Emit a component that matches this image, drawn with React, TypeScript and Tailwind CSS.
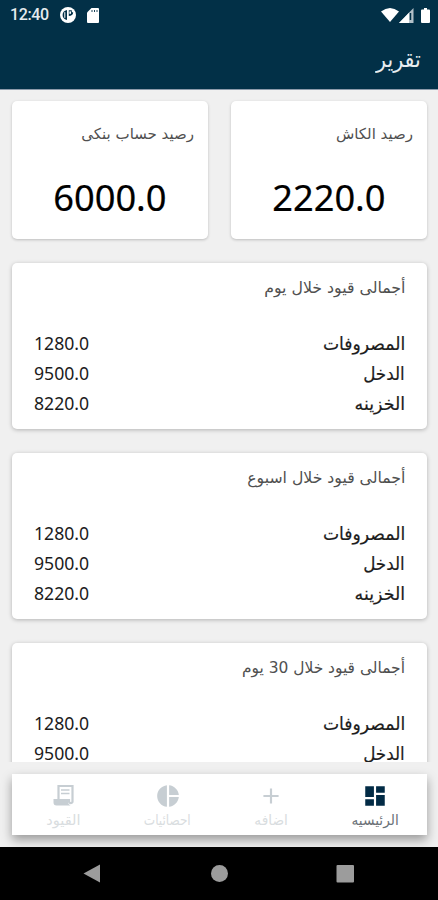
import React from "react";
import { MdAdd, MdDashboard, MdPieChart } from "react-icons/md";

const arabic = "font-['DejaVu_Sans',sans-serif]";
const digits = "font-['Noto_Sans',sans-serif]";

function StatusBar() {
  return (
    <div dir="ltr" className="flex h-[30px] items-center justify-between pl-[10px] pr-[8px] text-[#e6ebee]">
      <div className="flex items-center">
        <span className="w-[50px] font-[Roboto,sans-serif] text-[16px] font-medium leading-none tracking-[-0.4px]">12:40</span>
        <svg className="h-4 w-4" viewBox="0 0 16 16">
          <circle cx="8" cy="8" r="8" fill="#fff" />
          <path d="M7 3v10C3.800 12.200 2.600 10.300 2.600 8S4 3.600 7 3zM8.800 3.200h3v2h1.400C13.200 7.800 11.300 9 8.800 9z" fill="#023047" />
          <path d="M4.800 5.200v5.600" stroke="#fff" strokeWidth="1" />
          <rect x="9.400" y="4.400" width="1.600" height="2.400" fill="#fff" />
        </svg>
        <svg className="ml-[11px] h-[15px] w-3" viewBox="0 0 12 15">
          <path d="M4.500 0H11a1 1 0 0 1 1 1v13a1 1 0 0 1-1 1H1a1 1 0 0 1-1-1V4.500z" fill="#fff" />
          <path d="M5 2v2M7.500 2v2M10 2v2" stroke="#023047" strokeWidth=".9" />
        </svg>
      </div>
      <div className="flex items-center">
        <svg className="h-[14px] w-[18px]" viewBox="0 0 18 14">
          <path d="M0 3.500Q9-3.500 18 3.500L9 14z" fill="#fff" />
        </svg>
        <svg className="h-[15px] w-[15px]" viewBox="0 0 15 15">
          <path d="M14.500 0v15H0z" fill="#b3c0c8" />
          <path d="M10 4.700V15H0z" fill="#fff" />
          <path d="M11.500 5v7" stroke="#023047" strokeWidth="1.500" />
        </svg>
        <svg className="ml-[7px] h-[15px] w-[9px]" viewBox="0 0 9 15">
          <path d="M3 0h3v1.500h2a1 1 0 0 1 1 1V14a1 1 0 0 1-1 1H1a1 1 0 0 1-1-1V2.500a1 1 0 0 1 1-1h2z" fill="#fff" />
        </svg>
      </div>
    </div>
  );
}

function BalanceCard({ title, value }: { title: string; value: string }) {
  return (
    <section className="h-[138px] w-[196px] rounded-[5px] bg-white pt-[21px] shadow-[0_1px_3px_rgba(0,0,0,0.22)]">
      <h2 className={`h-6 whitespace-nowrap pr-[14px] ${arabic} text-[15px] leading-6 text-[#505050]`}>{title}</h2>
      <p className={`mt-[26px] text-center ${digits} text-[37px] leading-[50px] text-black [-webkit-text-stroke:0.2px_black]`}>
        <span className="inline-block scale-x-[0.98]">{value}</span>
      </p>
    </section>
  );
}

function Row({ label, labelClass, value }: { label: string; labelClass: string; value: string }) {
  return (
    <div className="flex h-[30px] items-center justify-between whitespace-nowrap text-[#1c1c1c]">
      <span className={`origin-right pt-px ${arabic} text-[18px] leading-[30px] [-webkit-text-stroke:0.2px_#1c1c1c] ${labelClass}`}>{label}</span>
      <span className={`origin-left scale-x-[0.98] ${digits} text-[18px] leading-[30px]`}>{value}</span>
    </div>
  );
}

function SummaryCard({ title, titleClass }: { title: string; titleClass: string }) {
  return (
    <section className="h-[166px] shrink-0 rounded-[5px] bg-white pl-[22px] pr-[22px] pt-[13px] shadow-[0_1px_4px_rgba(0,0,0,0.26)]">
      <h2 className={`mb-[28px] h-6 whitespace-nowrap ${arabic} text-[16px] leading-6 text-[#505050]`}>
        <span className={`inline-block origin-right ${titleClass}`}>{title}</span>
      </h2>
      <Row label="المصروفات" labelClass="scale-x-[0.955]" value="1280.0" />
      <Row label="الدخل" labelClass="scale-x-[0.93]" value="9500.0" />
      <Row label="الخزينه" labelClass="scale-x-[0.97]" value="8220.0" />
    </section>
  );
}

function ReceiptIcon() {
  return (
    <svg className="mb-[2px] h-6 w-6" viewBox="0 0 24 24">
      <path d="M6.500 3h14v16a2 2 0 0 1-3.500 0V17H6.500z" fill="none" stroke="currentColor" strokeWidth="2.200" />
      <path d="M9 7h8.500M9 10.500h8.500" stroke="currentColor" strokeWidth="1.700" />
      <path d="M1.500 16H16v3.500q.500 2 2.500 3H4.500q-3 0-3-3z" fill="currentColor" />
    </svg>
  );
}

function Tab({ label, icon, active, labelClass }: { label: string; icon: React.ReactNode; active?: boolean; labelClass: string }) {
  return (
    <button className={`flex flex-1 flex-col items-center pt-[9px] ${active ? "text-[#022b45]" : "text-[#c7ced3]"}`}>
      {icon}
      <span className={`whitespace-nowrap ${arabic} text-[14px] leading-[22px] ${active ? "text-[#6b7177]" : "text-[#d9dde0]"} ${labelClass}`}>{label}</span>
    </button>
  );
}

export default function App() {
  return (
    <div dir="rtl" className="flex h-[900px] w-[438px] flex-col overflow-hidden bg-[#f0f0f0]">
      <header className="h-[90px] shrink-0 border-b border-[#8d9bab] bg-[#023047]">
        <StatusBar />
        <h1 className={`pr-[17px] ${arabic} text-[23px] leading-[58px] text-[#e8edf0]`}>
          <span className="inline-block origin-right scale-x-[0.9]">تقرير</span>
        </h1>
      </header>
      <main className="flex h-[672px] shrink-0 flex-col gap-6 overflow-hidden pl-3 pr-[11px] pt-[11px]">
        <div className="flex shrink-0 justify-between">
          <BalanceCard title="رصيد الكاش" value="2220.0" />
          <BalanceCard title="رصيد حساب بنكى" value="6000.0" />
        </div>
        <SummaryCard title="أجمالى قيود خلال يوم" titleClass="scale-x-[0.985]" />
        <SummaryCard title="أجمالى قيود خلال اسبوع" titleClass="scale-x-[0.98]" />
        <SummaryCard title="أجمالى قيود خلال 30 يوم" titleClass="scale-x-[0.965]" />
      </main>
      <div className="h-[85px] shrink-0 pl-3 pr-[11px] pt-3">
        <nav className="flex h-[61px] bg-white shadow-[0_5px_10px_rgba(0,0,0,0.36)]">
          <Tab label="الرئيسيه" icon={<MdDashboard className="h-[26px] w-[26px]" />} active labelClass="scale-x-[0.98]" />
          <Tab label="اضافه" icon={<MdAdd className="h-[26px] w-[26px]" />} labelClass="scale-x-[0.98]" />
          <Tab label="احصائيات" icon={<MdPieChart className="h-[26px] w-[26px]" />} labelClass="scale-x-[0.86]" />
          <Tab label="القيود" icon={<ReceiptIcon />} labelClass="scale-x-[1.04]" />
        </nav>
      </div>
      <footer dir="ltr" className="flex h-[53px] shrink-0 items-center bg-black pl-[83px] text-[#9c9c9c]">
        <svg className="h-[19px] w-[272px]" viewBox="0 0 272 19" fill="currentColor">
          <path d="M17 .500v18L.500 9.500z" />
          <circle cx="136.500" cy="9.500" r="8.500" />
          <rect x="253.500" y="1" width="17.500" height="17.500" rx="1" />
        </svg>
      </footer>
    </div>
  );
}
